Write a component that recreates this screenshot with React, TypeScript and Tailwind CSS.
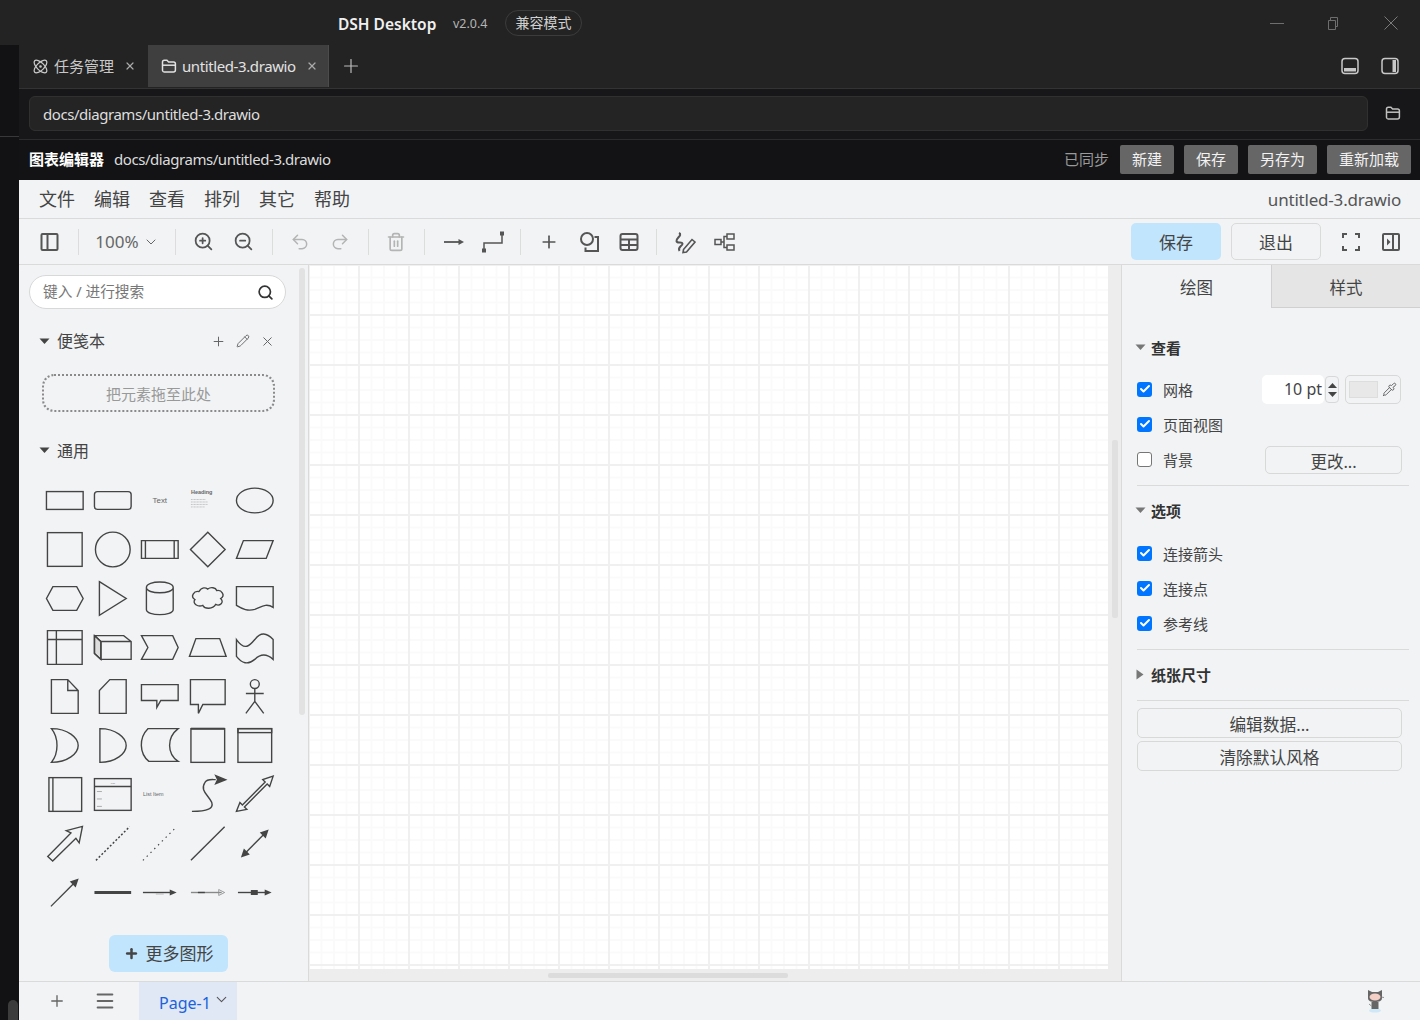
import type { ReactNode } from "react";
import { Atom, Check, ChevronDown, Menu, Pencil, Pipette, Plus, Redo2, Search, Trash2, Undo2, X, ZoomIn, ZoomOut } from "lucide-react";

const font = "font-['Noto_Sans','Noto_Sans_CJK_SC',sans-serif]";

function FolderIcon({ className }: { className?: string }) {
  return (
    <svg viewBox="0 0 18 18" fill="none" stroke="currentColor" strokeWidth="1.5" className={className}>
      <path d="M2.5 13.5V5a1.8 1.8 0 0 1 1.8-1.8h2.6L8.6 5h5a1.8 1.8 0 0 1 1.8 1.8V13a2 2 0 0 1-2 2H4.2a1.8 1.8 0 0 1-1.7-1.5z" />
      <path d="M2.5 8.2h12.9" />
    </svg>
  );
}

function Icon({ children, size = 24 }: { children: ReactNode; size?: number }) {
  return (
    <svg width={size} height={size} viewBox="0 0 24 24" fill="none" stroke="#555" strokeWidth="1.8">
      {children}
    </svg>
  );
}

function ToolBtn({ children }: { children: ReactNode }) {
  return <div className="flex h-10 w-10 items-center justify-center text-[#555]">{children}</div>;
}

function Sep() {
  return <div className="mx-[7.6px] h-[26px] w-px bg-[#dcdcdc]" />;
}

function Caret({ right, light }: { right?: boolean; light?: boolean }) {
  const color = light ? "#777" : "#444";
  return (
    <svg width="11" height="11" viewBox="0 0 11 11">
      <path d={right ? "M1.5 0.5 8.5 5.5 1.5 10.5z" : "M0.5 2.5h10L5.5 8z"} fill={color} />
    </svg>
  );
}

function Shape({ children }: { children?: ReactNode }) {
  return (
    <svg viewBox="-24 -24.5 48 49" className="h-[49px] w-full" fill="none" stroke="#444" strokeWidth="1.4">
      {children}
    </svg>
  );
}

const shapes: ReactNode[] = [
  <rect x="-18.5" y="-9" width="37" height="18" />,
  <rect x="-18.5" y="-9" width="37" height="18" rx="3" />,
  <text x="0" y="3" textAnchor="middle" fontSize="8" fill="#666" stroke="none" fontFamily="Liberation Sans">Text</text>,
  <g>
    <text x="-17" y="-7" fontSize="5.5" fontWeight="bold" fill="#666" stroke="none" fontFamily="Liberation Sans">Heading</text>
    <path d="M-17 -1h15M-17 1.5h17M-17 4h17M-17 6.5h14" stroke="#aaa" strokeWidth="0.7" strokeDasharray="1 0.5" />
  </g>,
  <ellipse rx="18.5" ry="12.5" />,

  <rect x="-17.5" y="-17" width="35" height="34" />,
  <circle r="17.5" />,
  <path d="M-18.5 -9h37v18h-37zM-14.5 -9v18M14.5 -9v18" />,
  <path d="M0 -17.5 17.5 0 0 17.5 -17.5 0z" />,
  <path d="M-11.5 -9H18.5L11.5 9H-18.5z" />,

  <path d="M-18.5 0-12-12H12L18.5 0 12 12H-12z" />,
  <path d="M-13.5 -17 13.5 0-13.5 17z" />,
  <path d="M-13.5 -11V11C-13.5 18 13.5 18 13.5 11V-11C13.5 -18.5-13.5 -18.5-13.5 -11C-13.5 -4 13.5 -4 13.5 -11" />,
  <path d="M-9 -7C-6 -12 -2 -11 0 -9.5 3 -12 8 -11 9 -8 14 -9 18 -3 13 0 17 4 12 8 8 6 5 11-3 11-5 7-10 9-16 5-13 1-18 -2-14-8-9-7z" />,
  <path d="M-18.5 -12H18.5V9C11 4 6 9 0 11-7 13-12 11-18.5 7z" />,

  <path d="M-17.5 -17H17.5V17H-17.5zM-17.5 -8H17.5M-8.5 -17V17" />,
  <g>
    <path d="M-18.5 -12-12 -6V12L-18.5 6z" fill="#ddd" />
    <path d="M-18.5 -12H11L18.5 -6V12H-12L-18.5 6zM-18.5 -12-12 -6H18.5M-12 -6V12" />
  </g>,
  <path d="M-18.5 -12H13L18.5 0 13 12H-18.5L-12 0z" />,
  <path d="M-12 -9H12L18.5 9H-18.5z" />,
  <path d="M-18.5 -8C-10 4-5-2 0 -8 6 -16 12 -15 18.5 -8V12C12 6 6 6 0 12-7 18-13 16-18.5 9z" />,

  <path d="M-13.5 -17H3L13.5 -6V17H-13.5zM3 -17V-6H13.5" />,
  <path d="M-3 -17H13.5V17H-13.5V-6z" />,
  <path d="M-18.5 -12H18.5V4H1L-3 11V4H-18.5z" />,
  <path d="M-17.5 -17H17.5V8H-5L-9.5 17V8H-17.5z" />,
  <g>
    <circle cx="0" cy="-12.5" r="4.5" />
    <path d="M0 -8V5M-9 -3H9M0 5-9 17M0 5 9 17" />
  </g>,

  <path d="M-13.5 -17C3 -17 13.5 -8 13.5 0 13.5 8 3 17-13.5 17-6 8-6 -8-13.5 -17z" />,
  <path d="M-13 -17C3 -17 13.5 -8 13.5 0 13.5 8 3 17-13 17z" />,
  <path d="M-12 -17H18.5C7 -8 7 8 18.5 16H-11C-21 8-21 -8-12 -17z" />,
  <g>
    <rect x="-17" y="-17" width="34" height="34" />
    <path d="M-17 -17H17" strokeWidth="2" />
  </g>,
  <g>
    <rect x="-17" y="-17" width="34" height="34" />
    <rect x="-17" y="-17" width="34" height="4" />
  </g>,

  <g>
    <rect x="-16" y="-17" width="33" height="34" />
    <path d="M-12 -17V17" />
  </g>,
  <g>
    <rect x="-18.5" y="-16" width="37" height="32" />
    <path d="M-18.5 -8H18.5" />
    <path d="M-16 -3h5M-16 4.5h5M-16 12h5" stroke="#999" strokeWidth="0.8" />
    <text x="0" y="-11" textAnchor="middle" fontSize="2.5" fill="#777" stroke="none">List</text>
  </g>,
  <text x="-17" y="2" fontSize="5.5" fill="#666" stroke="none" fontFamily="Liberation Sans">List Item</text>,
  <g>
    <path d="M-16 17C0 17 6 14 4 8 0 0-8-4-3-12-1-16 4-15 8-15" />
    <path d="M8 -19 18 -15 8 -11 10 -15z" fill="#444" />
  </g>,
  <path d="M-18.5 17-15 8-12.5 10.5 10.5 -12.5 8 -15 18.5 -18.5 15 -8 12.5 -10.5 -10.5 12.5 -8 15z" />,

  <path d="M-17.2 13 6.2 -10.7 1.5 -13 17.8 -17.3 14.5 -0.7 11.2 -5.3-12.2 17.7z" />,
  <path d="M-17 17 17 -17" strokeWidth="1.5" strokeDasharray="2 2" />,
  <path d="M-17 17 17 -17" strokeWidth="1.2" strokeDasharray="1.4 4" />,
  <path d="M-17 17 17 -17" strokeWidth="1.4" />,
  <g>
    <path d="M-11 11 11 -11" />
    <path d="M14 -14 5 -11 11 -5zM-14 14-5 11-11 5z" fill="#444" stroke="none" />
  </g>,

  <g>
    <path d="M-14 14 11 -11" />
    <path d="M14 -14 5 -11 11 -5z" fill="#444" stroke="none" />
  </g>,
  <rect x="-18.5" y="-1.5" width="37" height="3" fill="#444" stroke="none" />,
  <g>
    <path d="M-17 0H12" />
    <path d="M17 0 10 -3V3z" fill="#444" stroke="none" />
    <path d="M-4 1.5H4" stroke="#aaa" strokeWidth="0.8" />
  </g>,
  <g>
    <path d="M-17 0H14" stroke="#888" />
    <path d="M-10 0H-3" strokeWidth="1.4" />
    <path d="M17 0 11 -3V3z" fill="none" stroke="#888" strokeWidth="0.8" />
  </g>,
  <g>
    <path d="M-17 0H12" />
    <path d="M17 0 10 -3V3z" fill="#444" stroke="none" />
    <rect x="-4" y="-2.5" width="7" height="5" fill="#444" stroke="none" />
  </g>,
];

function Row({ checked, label, children }: { checked: boolean; label: string; children?: ReactNode }) {
  return (
    <div className="flex h-[30px] items-center">
      <div
        className={
          checked
            ? "flex h-[15px] w-[15px] items-center justify-center rounded-[3px] bg-[#0075ff]"
            : "h-[15px] w-[15px] rounded-[3px] border border-[#767676] bg-white"
        }
      >
        {checked && <Check size={12} strokeWidth={4} color="white" />}
      </div>
      <span className="ml-[11px] pt-[2px] text-[15px] text-[#444]">{label}</span>
      {children}
    </div>
  );
}

function PanelHead({ label, right }: { label: string; right?: boolean }) {
  return (
    <div className="flex h-5 items-center">
      <div className="-ml-[2px]">
        <Caret right={right} light />
      </div>
      <span className="ml-[5px] pt-[2px] text-[15px] font-bold text-[#333]">{label}</span>
    </div>
  );
}

function PanelBtn({ label }: { label: string }) {
  return (
    <div className="flex h-[30px] w-[265px] items-center justify-center rounded-[5px] border border-[#d8d8d8] pt-[3px] text-[16.7px] text-[#444]">
      {label}
    </div>
  );
}

function Octocat() {
  return (
    <svg width="18" height="24" viewBox="0 0 18 24">
      <ellipse cx="9" cy="21.5" rx="6" ry="2" fill="#cfe8f7" />
      <path d="M2 1 6 3H12L16 1V9C16 12 13 13 9 13 5 13 2 12 2 9z" fill="#666" />
      <ellipse cx="9" cy="8" rx="5.5" ry="3.5" fill="#f3cfc6" />
      <path d="M5.5 13H12.5V20H5.5z" fill="#666" />
      <path d="M3 15 5.5 17M15 8 18 8.5" stroke="#777" strokeWidth="0.8" />
    </svg>
  );
}

export default function App() {
  return (
    <div className={`flex h-[1020px] w-[1420px] flex-col overflow-hidden bg-[#232323] ${font}`}>
      {/* window title bar */}
      <div className="flex h-[45px] shrink-0 items-center bg-[#232323]">
        <span className="ml-[338px] w-[98px] whitespace-nowrap pt-[5px] text-[15.5px] font-semibold text-[#f0f0f0]">DSH Desktop</span>
        <span className="ml-[17px] w-[35px] whitespace-nowrap pt-[4px] text-[12.5px] text-[#b4b4b4]">v2.0.4</span>
        <span className="ml-[17px] flex h-[26px] w-[77px] items-center justify-center rounded-full border border-[#3c3c3c] text-[14px] text-[#d0d0d0]">
          兼容模式
        </span>
        <div className="ml-auto flex items-center">
          <svg width="14" height="14" viewBox="0 0 14 14" stroke="#6e6e6e" fill="none">
            <path d="M0 7.5H14" />
          </svg>
          <svg width="14" height="14" viewBox="0 0 14 14" stroke="#6e6e6e" fill="none" className="ml-[42px]">
            <path d="M2.5 4.5h7v9h-7zM4.5 4.5V1.5h7v9h-2" />
          </svg>
          <svg width="16" height="16" viewBox="0 0 16 16" stroke="#7a7a7a" fill="none" className="ml-[43px] mr-[21px]">
            <path d="M1.5 1.5 14.5 14.5M14.5 1.5 1.5 14.5" />
          </svg>
        </div>
      </div>

      <div className="flex min-h-0 flex-1">
        {/* activity strip */}
        <div className="flex w-[19px] shrink-0 flex-col bg-[#121214]">
          <div className="h-[92px] shrink-0 border-b border-[#38383a]" />
          <div className="ml-[8px] mt-auto h-[20px] w-[10px] rounded-t-[5px] bg-[#3c3c3c]" />
        </div>

        <div className="flex min-w-0 flex-1 flex-col">
          {/* tabs */}
          <div className="flex h-11 shrink-0 items-stretch border-b border-[#333] bg-[#232323] pb-px">
            <div className="flex w-[129px] items-center pl-[13px] text-[#c8c8c8]">
              <Atom size={17} strokeWidth={1.8} />
              <span className="ml-[5px] text-[15px]">任务管理</span>
              <X size={12} strokeWidth={2.4} className="ml-[10px] text-[#aaa]" />
            </div>
            <div className="flex w-[181px] items-center border-r border-[#4c4c4c] bg-[#3f3f3f] pl-[12px] text-[#e2e2e2]">
              <FolderIcon className="h-[18px] w-[18px]" />
              <span className="ml-[4px] text-[15px] tracking-[-0.4px]">untitled-3.drawio</span>
              <X size={12} strokeWidth={2.4} className="ml-[10px] text-[#aaa]" />
            </div>
            <div className="ml-[11px] flex items-center">
              <Plus size={22} strokeWidth={1.3} className="text-[#bdbdbd]" />
            </div>
            <div className="ml-auto mr-[20px] flex items-center gap-[20px]">
              <svg width="20" height="20" viewBox="0 0 20 20" fill="none">
                <rect x="2" y="2.5" width="16" height="15" rx="3" stroke="#c8c8c8" strokeWidth="1.5" />
                <rect x="4" y="12" width="12" height="3.5" fill="#c8c8c8" />
              </svg>
              <svg width="20" height="20" viewBox="0 0 20 20" fill="none">
                <rect x="2" y="2.5" width="16" height="15" rx="3" stroke="#c8c8c8" strokeWidth="1.5" />
                <rect x="12.5" y="4" width="3.5" height="12" fill="#c8c8c8" />
              </svg>
            </div>
          </div>

          {/* path bar */}
          <div className="flex h-[51px] shrink-0 items-center border-b border-[#2c2c2e] bg-[#171719] pb-[2px] pl-[10px]">
            <div className="flex h-[35px] w-[1339px] items-center rounded-[6px] border border-[#303030] bg-[#242424] pl-[13px] pt-[3px] text-[15px] tracking-[-0.45px] text-[#dedede]">
              docs/diagrams/untitled-3.drawio
            </div>
            <FolderIcon className="ml-[16px] h-[18px] w-[18px] text-[#c0c0c0]" />
          </div>

          {/* editor bar */}
          <div className="flex h-10 shrink-0 items-center bg-[#131315] pb-[2px] pl-[10px] pr-[9px]">
            <span className="text-[15px] font-bold text-white">图表编辑器</span>
            <span className="ml-[10px] text-[15px] tracking-[-0.45px] text-[#dcdcdc]">docs/diagrams/untitled-3.drawio</span>
            <span className="ml-auto mr-[11px] text-[15px] text-[#9a9a9a]">已同步</span>
            <div className="flex gap-[10px] text-[15px] text-[#f2f2f2]">
              <div className="flex h-[29px] w-[54px] items-center justify-center rounded-[2px] bg-[#666]">新建</div>
              <div className="flex h-[29px] w-[54px] items-center justify-center rounded-[2px] bg-[#666]">保存</div>
              <div className="flex h-[29px] w-[69px] items-center justify-center rounded-[2px] bg-[#666]">另存为</div>
              <div className="flex h-[29px] w-[84px] items-center justify-center rounded-[2px] bg-[#666]">重新加载</div>
            </div>
          </div>

          {/* drawio */}
          <div className="flex min-h-0 flex-1 flex-col bg-[#f1f3f5]">
            <div className="flex h-[39px] shrink-0 items-center border-b border-[#dadada] pl-[20px] pr-[19px] text-[18px] text-[#444]">
              <div className="flex gap-[19px]">
                <span>文件</span>
                <span>编辑</span>
                <span>查看</span>
                <span>排列</span>
                <span>其它</span>
                <span>帮助</span>
              </div>
              <span className="ml-auto pt-[1px] text-[17px] tracking-[-0.2px] text-[#555]">untitled-3.drawio</span>
            </div>

            {/* toolbar */}
            <div className="flex h-[46px] shrink-0 items-center border-b border-[#dadada] pl-[11px]">
              <ToolBtn>
                <Icon>
                  <rect x="3.5" y="4" width="16" height="16" rx="1" strokeWidth="2" />
                  <path d="M9.5 4V20" strokeWidth="2" />
                </Icon>
              </ToolBtn>
              <Sep />
              <div className="flex w-[81.6px] items-center justify-center gap-[4px] text-[17px] text-[#666]">
                100%
                <ChevronDown size={16} strokeWidth={1.5} />
              </div>
              <Sep />
              <ToolBtn><ZoomIn size={21} strokeWidth={2} /></ToolBtn>
              <ToolBtn><ZoomOut size={21} strokeWidth={2} /></ToolBtn>
              <Sep />
              <ToolBtn><Undo2 size={20} strokeWidth={1.8} className="text-[#b4b4b4]" /></ToolBtn>
              <ToolBtn><Redo2 size={20} strokeWidth={1.8} className="text-[#b4b4b4]" /></ToolBtn>
              <Sep />
              <ToolBtn><Trash2 size={20} strokeWidth={2} className="text-[#b4b4b4]" /></ToolBtn>
              <Sep />
              <ToolBtn>
                <Icon>
                  <path d="M3 12H18" />
                  <path d="M23 12 17.5 9V15z" fill="#555" stroke="none" />
                </Icon>
              </ToolBtn>
              <ToolBtn>
                <Icon>
                  <path d="M3 20V13H21V4" strokeWidth="1.5" />
                  <rect x="1" y="18.5" width="4" height="4" fill="#555" stroke="none" />
                  <rect x="19" y="1.5" width="4" height="4" fill="#555" stroke="none" />
                </Icon>
              </ToolBtn>
              <Sep />
              <ToolBtn><Plus size={20} strokeWidth={2} /></ToolBtn>
              <ToolBtn>
                <Icon>
                  <circle cx="10" cy="9" r="6" strokeWidth="2" />
                  <path d="M17.5 7H21V21H8.5V17.5" strokeWidth="2" />
                </Icon>
              </ToolBtn>
              <ToolBtn>
                <Icon>
                  <rect x="3.5" y="4" width="17" height="16" rx="2" strokeWidth="2" />
                  <path d="M3.5 9.5H20.5M3.5 15H20.5M12 9.5V20" strokeWidth="2" />
                </Icon>
              </ToolBtn>
              <Sep />
              <ToolBtn>
                <Icon>
                  <path d="M6 3C10 5 3 8 3.5 11 4 14 9 11 9.5 13.5 10 16 4 17 6.5 21" strokeWidth="2" />
                  <path d="M10.5 19.5 19 9.5 22 12 13.5 22 10 22.5z" strokeWidth="1.6" />
                </Icon>
              </ToolBtn>
              <ToolBtn>
                <Icon>
                  <rect x="2" y="9.5" width="6" height="5" strokeWidth="1.5" />
                  <rect x="14" y="4" width="7" height="5" strokeWidth="1.5" />
                  <rect x="14" y="15" width="7" height="5" strokeWidth="1.5" />
                  <path d="M8 12H11V6.5H14M11 12V17.5H14" strokeWidth="1.5" />
                </Icon>
              </ToolBtn>
              <div className="ml-auto flex items-center">
                <div className="flex h-[37px] w-[90px] items-center justify-center rounded-[5px] bg-[#c2e5fe] pt-[2px] text-[17px] text-[#444]">保存</div>
                <div className="ml-[10px] flex h-[37px] w-[90px] items-center justify-center rounded-[5px] border border-[#dadada] pt-[2px] text-[17px] text-[#444]">退出</div>
                <div className="ml-[10px]">
                  <ToolBtn>
                    <Icon>
                      <path d="M4 8V4H8M16 4H20V8M4 16V20H8M20 16V20H16" strokeWidth="2" />
                    </Icon>
                  </ToolBtn>
                </div>
                <ToolBtn>
                  <Icon>
                    <rect x="4" y="4" width="16" height="16" rx="1" strokeWidth="2" />
                    <path d="M14 4V20" strokeWidth="2" />
                    <path d="M8 8.5 11.5 12 8 15.5z" fill="#555" stroke="none" />
                  </Icon>
                </ToolBtn>
                <div className="w-[9px]" />
              </div>
            </div>

            {/* body */}
            <div className="flex min-h-0 flex-1">
              {/* shapes sidebar */}
              <div className="flex w-[290px] shrink-0 border-r border-[#dadada]">
                <div className="flex w-[280px] shrink-0 flex-col">
                  <div className="ml-[10px] mt-[10px] flex h-[34px] w-[257px] items-center rounded-full border border-[#d8d8d8] bg-white pb-[1px] pl-[13px] pr-[11px] text-[14.7px] text-[#777]">
                    键入 / 进行搜索
                    <Search size={17} strokeWidth={2.4} className="ml-auto mt-[2px] text-[#333]" />
                  </div>
                  <div className="ml-[20px] mt-[22px] flex h-5 items-center text-[16px] text-[#444]">
                    <Caret />
                    <span className="ml-[7px]">便笺本</span>
                    <div className="ml-auto mr-[24px] flex w-[64px] items-center justify-between text-[#666]">
                      <Plus size={15} strokeWidth={1.6} />
                      <Pencil size={14} strokeWidth={1.6} />
                      <X size={15} strokeWidth={1.6} />
                    </div>
                  </div>
                  <div className="ml-[23px] mt-[23px] flex h-[38px] w-[233px] items-center justify-center rounded-[12px] border-2 border-dotted border-[#8a8a8a] pt-[2px] text-[15px] text-[#999]">
                    把元素拖至此处
                  </div>
                  <div className="ml-[20px] mt-[29px] flex h-5 items-center pb-[1px] text-[16px] text-[#444]">
                    <Caret />
                    <span className="ml-[7px]">通用</span>
                  </div>
                  <div className="ml-[22px] mt-[15px] grid w-[238px] grid-cols-5">
                    {shapes.map((s, i) => (
                      <Shape key={i}>{s}</Shape>
                    ))}
                  </div>
                  <div className="ml-[90px] mt-[18px] flex h-[37px] w-[119px] items-center justify-center gap-[7px] rounded-[6px] bg-[#c2e5fe] text-[17px] text-[#444]">
                    <Plus size={15} strokeWidth={4} />
                    更多图形
                  </div>
                </div>
                <div className="mt-[3px] h-[447px] w-[6px] rounded-[3px] bg-[#e2e2e2]" />
              </div>

              {/* canvas */}
              <div className="flex min-w-0 flex-1 bg-[#ededed]">
                <div className="flex min-w-0 flex-1 flex-col">
                  <div className="min-h-0 flex-1 bg-white bg-[linear-gradient(to_right,#f0f0f0_2px,transparent_2px),linear-gradient(to_bottom,#f0f0f0_2px,transparent_2px),linear-gradient(to_right,#fafafa_2px,transparent_2px),linear-gradient(to_bottom,#fafafa_2px,transparent_2px)] bg-[size:50px_50px,50px_50px,12.5px_12.5px,12.5px_12.5px] bg-[position:-1px_-1px]" />
                  <div className="flex h-3 shrink-0 items-center">
                    <div className="ml-[239px] h-[5px] w-[240px] rounded-[2px] bg-[#dcdcdc]" />
                  </div>
                </div>
                <div className="flex w-[13px] shrink-0 justify-center">
                  <div className="mt-[175px] h-[178px] w-[6px] rounded-[2px] bg-[#e0e0e0]" />
                </div>
              </div>

              {/* format panel */}
              <div className="flex w-[299px] shrink-0 flex-col border-l border-[#dadada]">
                <div className="flex h-[43px] shrink-0 text-[16.5px] text-[#444]">
                  <div className="flex w-[149px] items-center justify-center pt-[4px]">绘图</div>
                  <div className="flex flex-1 items-center justify-center border-b border-l border-[#d0d0d0] bg-[#e5e5e5] pt-[4px]">样式</div>
                </div>
                <div className="flex flex-col pl-[15px] pr-[11px]">
                  <div className="mt-[29px]">
                    <PanelHead label="查看" />
                  </div>
                  <div className="mt-[17px] flex flex-col gap-[5px]">
                    <Row checked label="网格">
                      <div className="ml-[69px] mt-[1px] flex h-[29px] w-[62px] items-center justify-end rounded-[5px] bg-white pb-[1px] pr-[2px] text-[16px] text-[#444]">10 pt</div>
                      <div className="ml-px mt-[1px] flex h-[27px] w-[14px] flex-col items-center justify-center gap-[4px] rounded-[4px] border border-[#d8d8d8]">
                        <svg width="9" height="5" viewBox="0 0 9 5"><path d="M4.5 0 9 5H0z" fill="#444" /></svg>
                        <svg width="9" height="5" viewBox="0 0 9 5"><path d="M0 0H9L4.5 5z" fill="#444" /></svg>
                      </div>
                      <div className="ml-[6px] mt-[1px] flex h-[29px] w-[56px] items-center rounded-[5px] border border-[#d8d8d8] pl-[3px]">
                        <div className="h-[17px] w-[29px] border border-[#ddd] bg-[#e8e8e8]" />
                        <Pipette size={15} strokeWidth={1.4} className="ml-[4px] text-[#555]" />
                      </div>
                    </Row>
                    <Row checked label="页面视图" />
                    <Row checked={false} label="背景">
                      <div className="ml-[72px] mt-[2px] flex h-[28px] w-[137px] items-center justify-center rounded-[5px] border border-[#d8d8d8] pt-[5px] text-[16.5px] text-[#444]">更改...</div>
                    </Row>
                  </div>
                  <div className="mt-[11px] h-px bg-[#dadada]" />
                  <div className="mt-[14px]">
                    <PanelHead label="选项" />
                  </div>
                  <div className="mt-[18px] flex flex-col gap-[5px]">
                    <Row checked label="连接箭头" />
                    <Row checked label="连接点" />
                    <Row checked label="参考线" />
                  </div>
                  <div className="mt-[11px] h-px bg-[#dadada]" />
                  <div className="mt-[14px]">
                    <PanelHead label="纸张尺寸" right />
                  </div>
                  <div className="mt-[16px] h-px bg-[#dadada]" />
                  <div className="mt-[7px] flex flex-col gap-[3px]">
                    <PanelBtn label="编辑数据..." />
                    <PanelBtn label="清除默认风格" />
                  </div>
                </div>
              </div>
            </div>

            {/* page footer */}
            <div className="flex h-[39px] shrink-0 items-stretch border-t border-[#dadada]">
              <div className="ml-[29px] flex items-center">
                <Plus size={18} strokeWidth={1.8} className="text-[#666]" />
              </div>
              <div className="ml-[28px] flex items-center">
                <Menu size={22} strokeWidth={2.2} className="text-[#666]" />
              </div>
              <div className="ml-[23px] flex w-[98px] items-center bg-[#e0e7f5] pl-[20px] pt-[3px] text-[16px] text-[#1a63db]">
                Page-1
                <ChevronDown size={17} strokeWidth={1.5} className="mb-[6px] ml-[2px] text-[#555]" />
              </div>
              <div className="ml-auto mr-[36px] flex items-center">
                <Octocat />
              </div>
            </div>
          </div>
        </div>
      </div>
    </div>
  );
}
